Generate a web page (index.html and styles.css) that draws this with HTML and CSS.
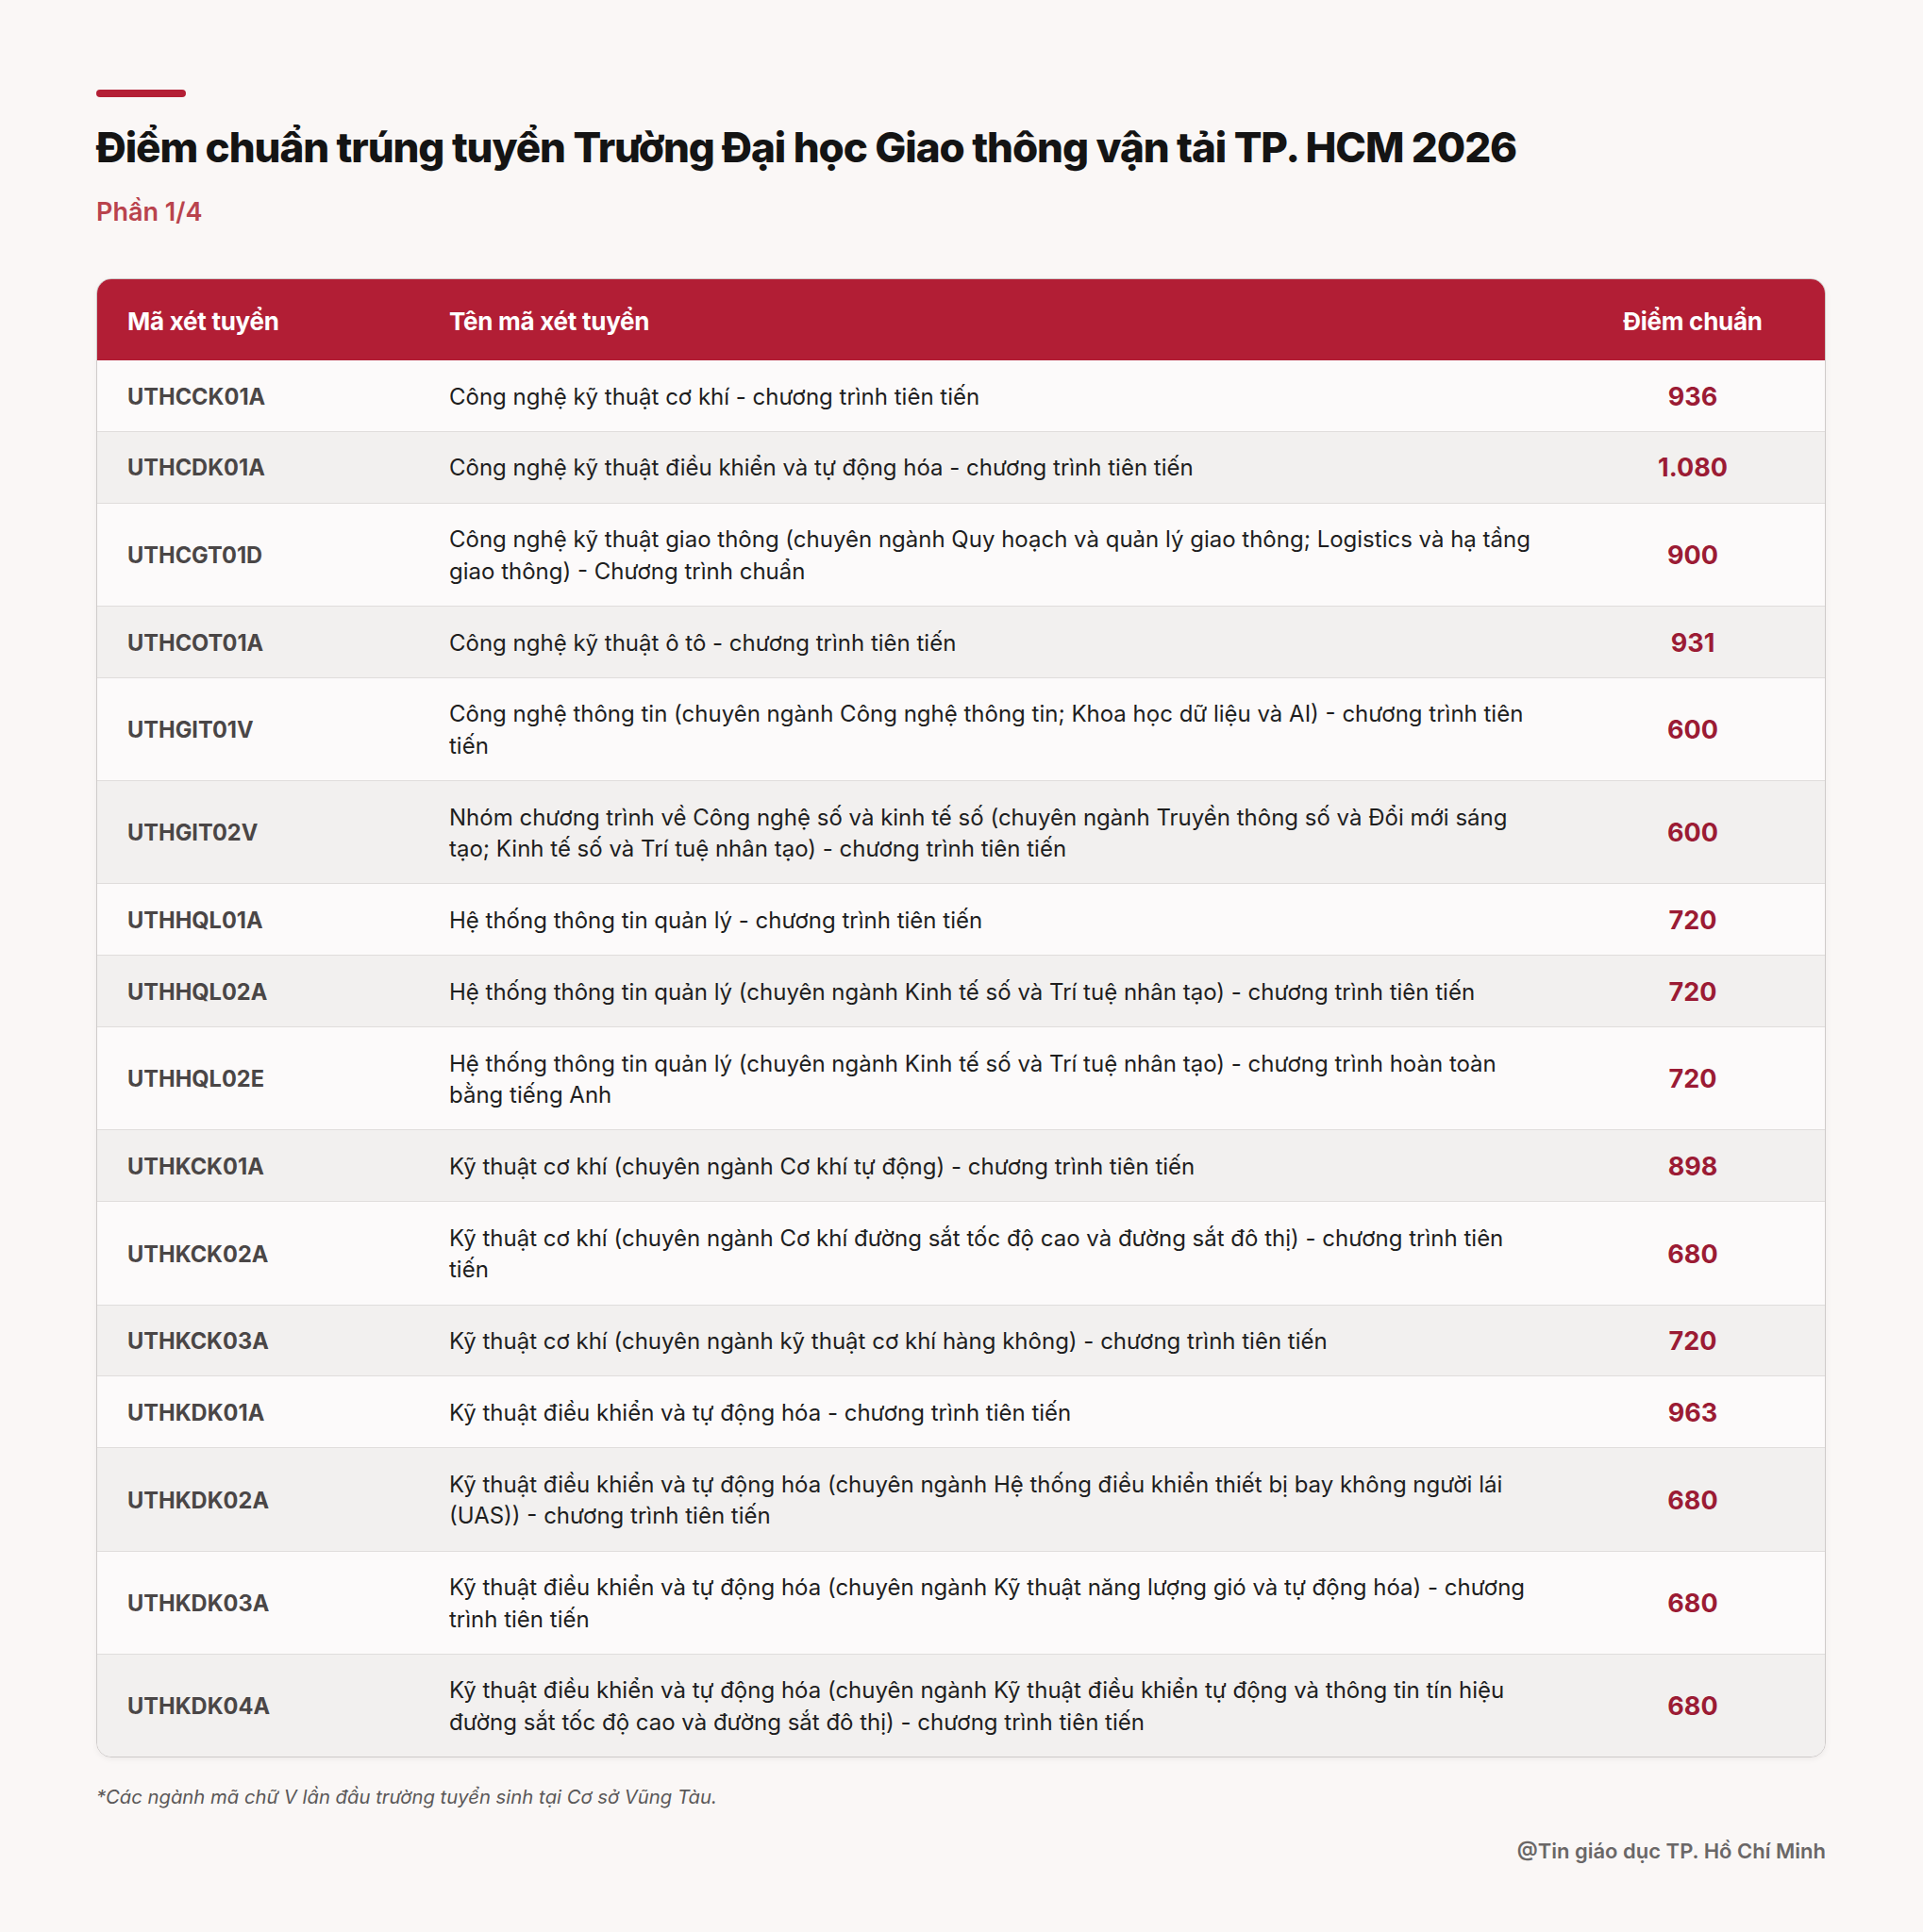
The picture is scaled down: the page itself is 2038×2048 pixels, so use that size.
FILE: index.html
```html
<!DOCTYPE html>
<html lang="vi">
<head>
<meta charset="utf-8">
<title>Điểm chuẩn</title>
<link rel="stylesheet" href="styles.css">
</head>
<body>
<main class="page">
  <div class="accent"></div>
  <h1 class="title">Điểm chuẩn trúng tuyển Trường Đại học Giao thông vận tải TP. HCM 2026</h1>
  <p class="subtitle">Phần 1/4</p>
  <section class="table">
    <div class="row head">
      <div class="c-code">Mã xét tuyển</div>
      <div class="c-name">Tên mã xét tuyển</div>
      <div class="c-score">Điểm chuẩn</div>
    </div>
    <div class="row"><div class="c-code">UTHCCK01A</div><div class="c-name">Công nghệ kỹ thuật cơ khí - chương trình tiên tiến</div><div class="c-score">936</div></div>
    <div class="row alt"><div class="c-code">UTHCDK01A</div><div class="c-name">Công nghệ kỹ thuật điều khiển và tự động hóa - chương trình tiên tiến</div><div class="c-score">1.080</div></div>
    <div class="row"><div class="c-code">UTHCGT01D</div><div class="c-name">Công nghệ kỹ thuật giao thông (chuyên ngành Quy hoạch và quản lý giao thông; Logistics và hạ tầng giao thông) - Chương trình chuẩn</div><div class="c-score">900</div></div>
    <div class="row alt"><div class="c-code">UTHCOT01A</div><div class="c-name">Công nghệ kỹ thuật ô tô - chương trình tiên tiến</div><div class="c-score">931</div></div>
    <div class="row"><div class="c-code">UTHGIT01V</div><div class="c-name">Công nghệ thông tin (chuyên ngành Công nghệ thông tin; Khoa học dữ liệu và AI) - chương trình tiên tiến</div><div class="c-score">600</div></div>
    <div class="row alt"><div class="c-code">UTHGIT02V</div><div class="c-name">Nhóm chương trình về Công nghệ số và kinh tế số (chuyên ngành Truyền thông số và Đổi mới sáng tạo; Kinh tế số và Trí tuệ nhân tạo) - chương trình tiên tiến</div><div class="c-score">600</div></div>
    <div class="row"><div class="c-code">UTHHQL01A</div><div class="c-name">Hệ thống thông tin quản lý - chương trình tiên tiến</div><div class="c-score">720</div></div>
    <div class="row alt"><div class="c-code">UTHHQL02A</div><div class="c-name">Hệ thống thông tin quản lý (chuyên ngành Kinh tế số và Trí tuệ nhân tạo) - chương trình tiên tiến</div><div class="c-score">720</div></div>
    <div class="row"><div class="c-code">UTHHQL02E</div><div class="c-name">Hệ thống thông tin quản lý (chuyên ngành Kinh tế số và Trí tuệ nhân tạo) - chương trình hoàn toàn bằng tiếng Anh</div><div class="c-score">720</div></div>
    <div class="row alt"><div class="c-code">UTHKCK01A</div><div class="c-name">Kỹ thuật cơ khí (chuyên ngành Cơ khí tự động) - chương trình tiên tiến</div><div class="c-score">898</div></div>
    <div class="row"><div class="c-code">UTHKCK02A</div><div class="c-name">Kỹ thuật cơ khí (chuyên ngành Cơ khí đường sắt tốc độ cao và đường sắt đô thị) - chương trình tiên tiến</div><div class="c-score">680</div></div>
    <div class="row alt"><div class="c-code">UTHKCK03A</div><div class="c-name">Kỹ thuật cơ khí (chuyên ngành kỹ thuật cơ khí hàng không) - chương trình tiên tiến</div><div class="c-score">720</div></div>
    <div class="row"><div class="c-code">UTHKDK01A</div><div class="c-name">Kỹ thuật điều khiển và tự động hóa - chương trình tiên tiến</div><div class="c-score">963</div></div>
    <div class="row alt"><div class="c-code">UTHKDK02A</div><div class="c-name">Kỹ thuật điều khiển và tự động hóa (chuyên ngành Hệ thống điều khiển thiết bị bay không người lái (UAS)) - chương trình tiên tiến</div><div class="c-score">680</div></div>
    <div class="row"><div class="c-code">UTHKDK03A</div><div class="c-name">Kỹ thuật điều khiển và tự động hóa (chuyên ngành Kỹ thuật năng lượng gió và tự động hóa) - chương trình tiên tiến</div><div class="c-score">680</div></div>
    <div class="row alt last"><div class="c-code">UTHKDK04A</div><div class="c-name">Kỹ thuật điều khiển và tự động hóa (chuyên ngành Kỹ thuật điều khiển tự động và thông tin tín hiệu đường sắt tốc độ cao và đường sắt đô thị) - chương trình tiên tiến</div><div class="c-score">680</div></div>
  </section>
  <p class="note">*Các ngành mã chữ V lần đầu trường tuyển sinh tại Cơ sở Vũng Tàu.</p>
  <p class="credit">@Tin giáo dục TP. Hồ Chí Minh</p>
</main>
</body>
</html>
```

FILE: styles.css
```css
* { box-sizing: border-box; }
html, body { margin: 0; padding: 0; }
body {
  background: #faf7f6;
  font-family: Inter, "Noto Sans", sans-serif;
  color: #1c1c1c;
  width: 2038px;
  min-height: 2048px;
}
.page {
  padding: 95px 103px 0 102px;
}
.accent {
  width: 95px;
  height: 8px;
  border-radius: 4px;
  background: #b41f35;
}
.title {
  margin: 26px 0 0;
  font-size: 44px;
  line-height: 54px;
  font-weight: 800;
  letter-spacing: -0.025em;
  color: #141414;
}
.subtitle {
  margin: 26px 0 0;
  font-size: 27px;
  line-height: 32px;
  font-weight: 600;
  color: #b9434d;
}
.table {
  margin-top: 54px;
  border: 1px solid #cfcbca;
  border-radius: 16px;
  overflow: hidden;
  background: #fbf9f9;
  box-shadow: 0 2px 6px rgba(0,0,0,0.05);
}
.row {
  display: grid;
  grid-template-columns: 341px 1fr 280px;
  align-items: center;
  padding-left: 32px;
  border-bottom: 1px solid #e0dddc;
  background: #fcfafa;
}
.row.alt { background: #f2f0ef; }
.row.last { border-bottom: none; }
.row.head {
  background: #b21e35;
  height: 86px;
  border-bottom: none;
}
.row.head .c-code, .row.head .c-name, .row.head .c-score {
  color: #ffffff;
  font-size: 26px;
  font-weight: 700;
  letter-spacing: -0.01em;
  padding: 0;
  margin-top: 3px;
}
.c-code {
  font-size: 23.6px;
  font-weight: 700;
  color: #4a4646;
  padding: 21.6px 0 19.6px;
  line-height: 33.6px;
}
.c-name {
  font-size: 24px;
  font-weight: 400;
  color: #1e1e1e;
  padding: 21.6px 32px 19.6px 0;
  line-height: 33.6px;
}
.c-score {
  text-align: center;
  font-size: 27px;
  font-weight: 700;
  color: #9b1b34;
  line-height: 33.6px;
  padding-top: 2px;
}
.note {
  margin: 29px 0 0;
  font-size: 20.3px;
  line-height: 26px;
  font-style: italic;
  color: #5a5858;
}
.credit {
  margin: 30px 0 0;
  text-align: right;
  font-size: 22px;
  line-height: 28px;
  font-weight: 600;
  color: #6a6767;
}
```
